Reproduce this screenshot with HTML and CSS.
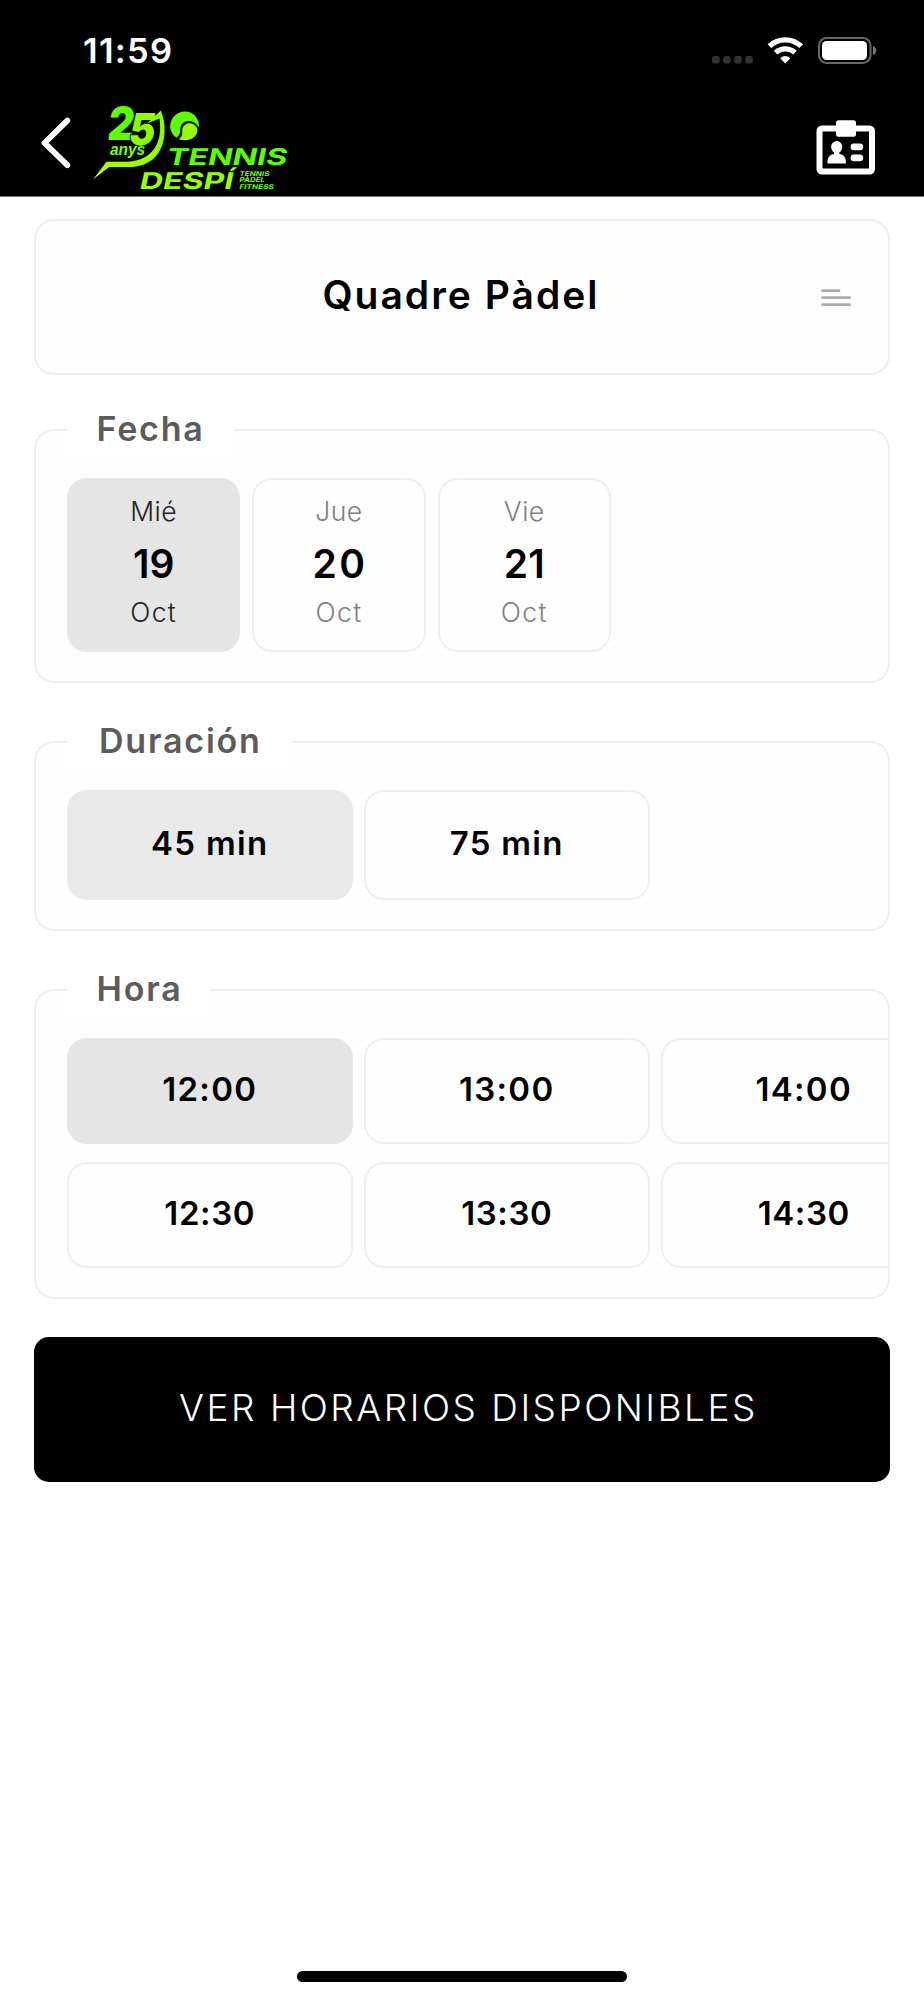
FILE: index.html
```html
<!DOCTYPE html>
<html lang="es">
<head>
<meta charset="utf-8">
<title>Quadre Pàdel</title>
<link rel="stylesheet" href="styles.css">
</head>
<body>
<header class="header">
  <div class="status">
    <span class="clock">11:59</span>
    <svg class="status-icons" width="170" height="30" viewBox="710 35 170 30">
      <g fill="#333"><rect x="712" y="56" width="7.6" height="7.4" rx="2.6"/><rect x="723" y="56" width="7.6" height="7.4" rx="2.6"/><rect x="734.2" y="56" width="7.6" height="7.4" rx="2.6"/><rect x="745.3" y="56" width="7.6" height="7.4" rx="2.6"/></g>
      <g fill="none" stroke="#fff" stroke-width="5.2"><path d="M769.4 46.2A23 23 0 0 1 801.2 46.2"/><path d="M775.6 52.7A14 14 0 0 1 795 52.7"/></g>
      <path fill="#fff" d="M780.2 58.2Q785.3 53.8 790.4 58.2L785.3 63.4Z"/>
      <rect x="819" y="38" width="51.5" height="25" rx="7.5" fill="none" stroke="#666" stroke-width="2"/>
      <rect x="822" y="41" width="45" height="19" rx="4.6" fill="#fff"/>
      <path fill="#777" d="M873 46Q876.2 47.5 876.2 50.5T873 55Z"/>
    </svg>
  </div>
  <div class="navbar">
    <svg class="back" width="32" height="56" viewBox="40 115 32 56"><path d="M67.3 120.6L44.5 143L67.3 165.2" fill="none" stroke="#fff" stroke-width="5.8" stroke-linecap="round" stroke-linejoin="round"/></svg>
    <svg class="logo" width="200" height="92" viewBox="90 102 200 92">
      <defs>
        <linearGradient id="lime" x1="0" x2="1" y1="1" y2="0"><stop offset="0" stop-color="#b4ff00"/><stop offset="1" stop-color="#7dff00"/></linearGradient>
      </defs>
      <text class="digit" transform="translate(106.5 140) skewX(-7)" font-size="46" textLength="26" lengthAdjust="spacingAndGlyphs" fill="#5cff00">2</text>
      <text class="digit" transform="translate(127.3 144.500) skewX(-9)" font-size="44" textLength="26" lengthAdjust="spacingAndGlyphs" fill="#8cff00" stroke="#000" stroke-width="2" paint-order="stroke">5</text>
      <path d="M93 179.5L106.5 161.8H126C152 161 163 144 159.5 118.5L147 123.5L160.8 110.5C169 130 166 164 133 167H109Z" fill="url(#lime)"/>
      <text class="anys" x="110" y="154.5" font-size="16.5" textLength="35" lengthAdjust="spacingAndGlyphs" fill="#80ff00">anys</text>
      <path d="M176.500 137.800C169 133 168.500 123 173.500 117C180 109.500 191 110 196 117C198.500 120.500 199.300 124 199 127.500C195 120 185 118.500 181 125.500C179.500 129.500 181.500 134 176.500 137.800Z" fill="#5cff00"/>
      <path d="M178.500 139.200C184 136 181.500 131.500 182.500 128C185.500 121.500 194 121.500 197.300 128.500C198.500 136 190 143 178.500 139.200Z" fill="#94ff00"/>
      <g class="brand">
        <text transform="translate(165.500 165) skewX(-12)" font-size="23" textLength="120.500" lengthAdjust="spacingAndGlyphs" fill="#5cff00">TENNIS</text>
        <text transform="translate(138.500 189) skewX(-12)" font-size="23" textLength="93.500" lengthAdjust="spacingAndGlyphs" fill="#98ff00">DESPÍ</text>
        <g fill="#6dff00" font-size="6.500">
          <text transform="translate(239 176) skewX(-12)" textLength="30" lengthAdjust="spacingAndGlyphs">TENNIS</text>
          <text transform="translate(239 182.200) skewX(-12)" textLength="25.500" lengthAdjust="spacingAndGlyphs">PÀDEL</text>
          <text transform="translate(239 189) skewX(-12)" textLength="34.500" lengthAdjust="spacingAndGlyphs">FITNESS</text>
        </g>
      </g>
    </svg>
    <svg class="badge" width="60" height="56" viewBox="816 119 60 56">
      <rect x="819.500" y="128.500" width="52.500" height="43" rx="2.500" fill="none" stroke="#fff" stroke-width="6"/>
      <rect x="836" y="120.300" width="20" height="16.500" rx="2.500" fill="#fff"/>
      <ellipse cx="836.700" cy="147" rx="5.600" ry="6" fill="#fff"/>
      <path d="M834 151H839.400V154C843.500 154.500 846 157 846 163.500H827.400C827.400 157 830 154.500 834 154Z" fill="#fff"/>
      <rect x="850.600" y="143.500" width="12.600" height="6.700" rx="3.300" fill="#fff"/>
      <rect x="850.600" y="154.600" width="12.600" height="6.700" rx="3.300" fill="#fff"/>
    </svg>
  </div>
</header>
<main class="content">
  <section class="selector">
    <h1 class="title">Quadre Pàdel</h1>
    <svg class="menu" width="32" height="20" viewBox="820 287 32 20"><path d="M822.500 290.700H839M822.500 297.600H849.700M822.500 304.700H849.700" stroke="#adadad" stroke-width="2.700" stroke-linecap="round"/></svg>
  </section>
  <section class="panel">
    <h2 class="legend legend-date">Fecha</h2>
    <div class="days">
      <div class="tile day selected"><span class="small">Mié</span><span class="num">19</span><span class="small month">Oct</span></div>
      <div class="tile day"><span class="small">Jue</span><span class="num num-wide">20</span><span class="small month">Oct</span></div>
      <div class="tile day"><span class="small">Vie</span><span class="num">21</span><span class="small month">Oct</span></div>
    </div>
  </section>
  <section class="panel">
    <h2 class="legend legend-duration">Duración</h2>
    <div class="slots durations">
      <div class="tile slot selected">45 min</div>
      <div class="tile slot">75 min</div>
    </div>
  </section>
  <section class="panel">
    <h2 class="legend legend-hour">Hora</h2>
    <div class="slots hours">
      <div class="tile slot full-hour selected">12:00</div>
      <div class="tile slot full-hour">13:00</div>
      <div class="tile slot full-hour">14:00</div>
      <div class="tile slot">12:30</div>
      <div class="tile slot">13:30</div>
      <div class="tile slot">14:30</div>
    </div>
  </section>
  <button class="submit">VER HORARIOS DISPONIBLES</button>
</main>
<footer class="home"><div class="home-bar"></div></footer>
</body>
</html>
```
FILE: styles.css
```css
* { box-sizing: border-box; }
body {
  margin: 0;
  height: 2000px;
  display: flex;
  flex-direction: column;
  background: #fff;
  color: #000;
  font-family: Inter, "Open Sans", sans-serif;
  overflow: hidden;
}
svg { display: block; }
h1, h2 { margin: 0; }

.header {
  height: 197px;
  flex: none;
  background: #000;
  border-bottom: 1px solid #777;
}
.status {
  height: 102px;
  padding: 35px 44px 0 83px;
  display: flex;
  justify-content: space-between;
  align-items: flex-start;
}
.clock {
  color: #fff;
  font-size: 34.500px;
  font-weight: 560;
  line-height: 32px;
  letter-spacing: 1.300px;
}
.navbar {
  display: flex;
  align-items: flex-start;
  padding: 0 48px 0 40px;
}
.back { margin-top: 13px; }
.logo { margin-left: 18px; overflow: visible; }
.badge { margin: 17px 0 0 auto; }
.digit { font-family: Inter, sans-serif; font-weight: 900; }
.anys { font-family: "Liberation Sans", sans-serif; font-weight: 700; font-style: italic; }
.brand { font-family: Inter, sans-serif; font-weight: 700; }

.content { padding: 22px 34px 0; }
.selector, .panel {
  border: 2px solid #efefef;
  border-radius: 20px;
  background: #fefefe;
}
.selector {
  height: 156px;
  display: grid;
  grid-template-columns: 1fr auto 1fr;
  align-items: center;
  padding: 0 36px 0 34px;
}
.title {
  grid-column: 2;
  padding-bottom: 4px;
  font-size: 39px;
  font-weight: 560;
  line-height: 50px;
  letter-spacing: 2px;
}
.menu { justify-self: end; }
.panel { margin-top: 54px; padding: 0 0 29px 31px; }
.selector + .panel { height: 254px; }
.panel + .panel { margin-top: 58px; }
.legend {
  height: 62px;
  margin: -33px 0 18px;
  padding-left: 29.500px;
  background: #fff;
  color: #5c5c5c;
  font-size: 34px;
  font-weight: 560;
  line-height: 62px;
  letter-spacing: 1.800px;
  white-space: nowrap;
}
.legend-date { width: 167px; }
.legend-duration { width: 225px; padding-left: 32px; }
.legend-hour { width: 143px; }

.days { display: flex; gap: 12px; }
.tile {
  border: 2px solid #efefef;
  border-radius: 20px;
  background: #fefefe;
  text-align: center;
}
.day {
  width: 173.300px;
  height: 174px;
  padding-top: 10px;
  display: flex;
  flex-direction: column;
  align-items: center;
}
.small {
  color: #808080;
  font-size: 26.500px;
  font-weight: 320;
  line-height: 43px;
  letter-spacing: 0.500px;
}
.num {
  font-size: 39px;
  font-weight: 600;
  line-height: 62px;
}
.num-wide { letter-spacing: 2.500px; padding-left: 2px; }
.month { line-height: 34px; letter-spacing: 1.400px; }
.selected { background: #e5e5e5; border-color: #e5e5e5; }
.selected .small { color: #222; }

.slots {
  display: grid;
  grid-template-columns: repeat(3, 285.500px);
  gap: 18px 11.500px;
  overflow: hidden;
}
.slot {
  height: 106px;
  padding-bottom: 4px;
  display: flex;
  align-items: center;
  justify-content: center;
  font-size: 33px;
  font-weight: 580;
  letter-spacing: 0.600px;
}
.full-hour { letter-spacing: 1.300px; }
.durations .slot { height: 110px; padding-bottom: 5px; letter-spacing: 1.300px; }
.durations .selected { background: #e9e9e9; border-color: #e9e9e9; }
.submit {
  display: block;
  width: 100%;
  height: 145px;
  margin-top: 38px;
  padding: 0 0 4px 13px;
  border: 0;
  border-radius: 15px;
  background: #000;
  color: #fff;
  font: 330 37px/50px Inter, sans-serif;
  letter-spacing: 2.500px;
}
.home { margin-top: auto; padding-bottom: 18px; }
.home-bar { width: 330px; height: 11px; margin: 0 auto; border-radius: 6px; background: #000; }
```
